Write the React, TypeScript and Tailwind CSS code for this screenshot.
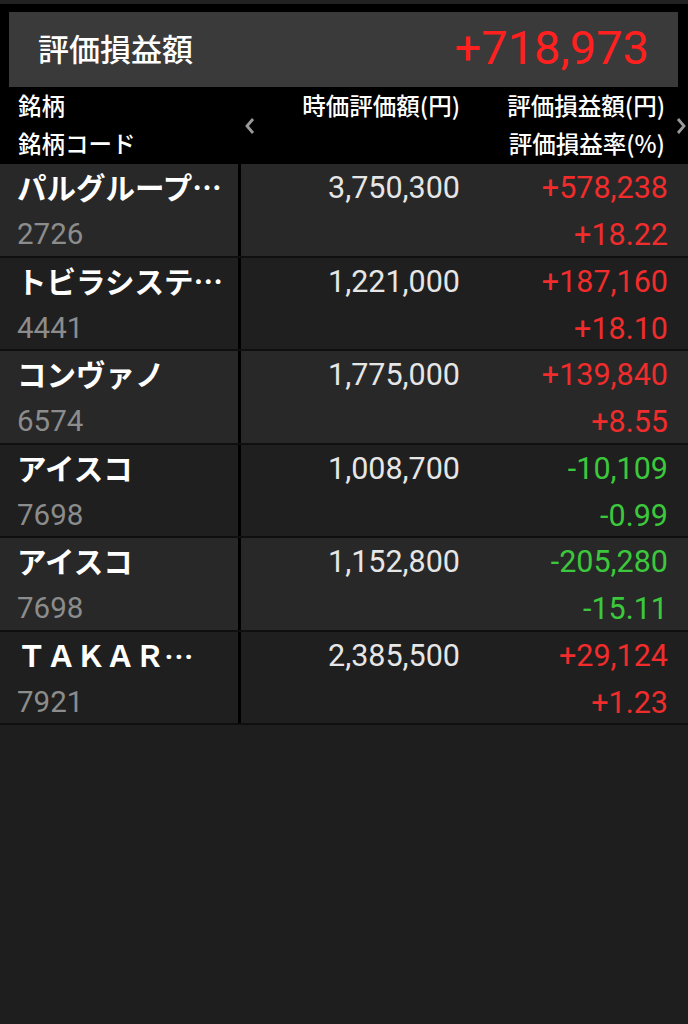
import React from "react";

type Row = {
  name: string;
  code: string;
  value: string;
  gain: string;
  rate: string;
  up: boolean;
  dots?: boolean;
};

const rows: Row[] = [
  { name: "パルグループ…", code: "2726", value: "3,750,300", gain: "+578,238", rate: "+18.22", up: true },
  { name: "トビラシステ…", code: "4441", value: "1,221,000", gain: "+187,160", rate: "+18.10", up: true },
  { name: "コンヴァノ", code: "6574", value: "1,775,000", gain: "+139,840", rate: "+8.55", up: true },
  { name: "アイスコ", code: "7698", value: "1,008,700", gain: "-10,109", rate: "-0.99", up: false },
  { name: "アイスコ", code: "7698", value: "1,152,800", gain: "-205,280", rate: "-15.11", up: false },
  { name: "ＴＡＫＡＲ", code: "7921", value: "2,385,500", gain: "+29,124", rate: "+1.23", up: true, dots: true },
];

const num = { fontFamily: "Roboto, 'Noto Sans CJK JP', sans-serif" };
const jp = { fontFamily: "'Noto Sans CJK JP', Roboto, sans-serif" };

const Chevron = ({ dir }: { dir: "left" | "right" }) => (
  <svg width="14" height="20" viewBox="0 0 14 20" className="text-[#9a9a9a]">
    <path
      d={dir === "left" ? "M10 3 L4 10 L10 17" : "M4 3 L10 10 L4 17"}
      fill="none"
      stroke="currentColor"
      strokeWidth="2.8"
    />
  </svg>
);

const App = () => {
  return (
    <div className="w-[688px] h-[1024px] bg-[#1e1e1e] text-white flex flex-col" style={num}>
      <div className="bg-black border-t-4 border-[#222222] pt-2 pb-[1px] pl-[9px] pr-[10px]">
        <div className="h-[75px] bg-[#3a3a3a] flex items-center justify-between pl-[29px] pr-[29px] pb-[5px]">
          <span className="text-[31px] font-medium leading-none" style={jp}>
            評価損益額
          </span>
          <span className="text-[47px] text-[#ff2020] leading-none">+718,973</span>
        </div>
      </div>

      <div className="h-[76px] bg-black flex items-center text-[23.5px] font-medium pb-[4px]" style={jp}>
        <div className="w-[238px] pl-[18px] flex flex-col gap-[6px] leading-[32px]">
          <span>銘柄</span>
          <span>銘柄コード</span>
        </div>
        <div className="w-[24px] flex justify-center pt-[4px]">
          <Chevron dir="left" />
        </div>
        <div className="w-[198px] self-start pt-[1px] text-right leading-[32px] whitespace-nowrap">時価評価額(円)</div>
        <div className="w-[205px] flex flex-col items-end gap-[6px] leading-[32px] whitespace-nowrap">
          <span>評価損益額(円)</span>
          <span>評価損益率(%)</span>
        </div>
        <div className="flex-1 flex justify-end pt-[4px]">
          <Chevron dir="right" />
        </div>
      </div>

      {rows.map((r, i) => (
        <div
          key={i}
          className={`h-[93.5px] flex border-b-2 border-[#0f0f0f] ${i % 2 === 0 ? "bg-[#282828]" : "bg-[#1f1f1f]"}`}
        >
          <div className="w-[238px] pl-[17px] flex flex-col pt-[4px]">
            <span className="h-[36px] text-[29.5px] font-bold leading-[36px] whitespace-nowrap" style={jp}>
              {r.name}
              {r.dots && (
                <span className="font-bold tracking-[1px] leading-none" style={num}>
                  ···
                </span>
              )}
            </span>
            <span className="text-[29.5px] text-[#8c8c8c] leading-[36px] mt-[12px]">{r.code}</span>
          </div>
          <div className="w-[3px] bg-black" />
          <div className="w-[219px] text-right pt-[6px] text-[30.5px] leading-[36px] text-[#e6e6e6]">{r.value}</div>
          <div
            className={`w-[208px] flex flex-col items-end pt-[6px] text-[30.5px] leading-[36px] ${r.up ? "text-[#f02c2c]" : "text-[#3cc83c]"}`}
          >
            <span>{r.gain}</span>
            <span className="mt-[11px]">{r.rate}</span>
          </div>
        </div>
      ))}
    </div>
  );
};

export default App;
